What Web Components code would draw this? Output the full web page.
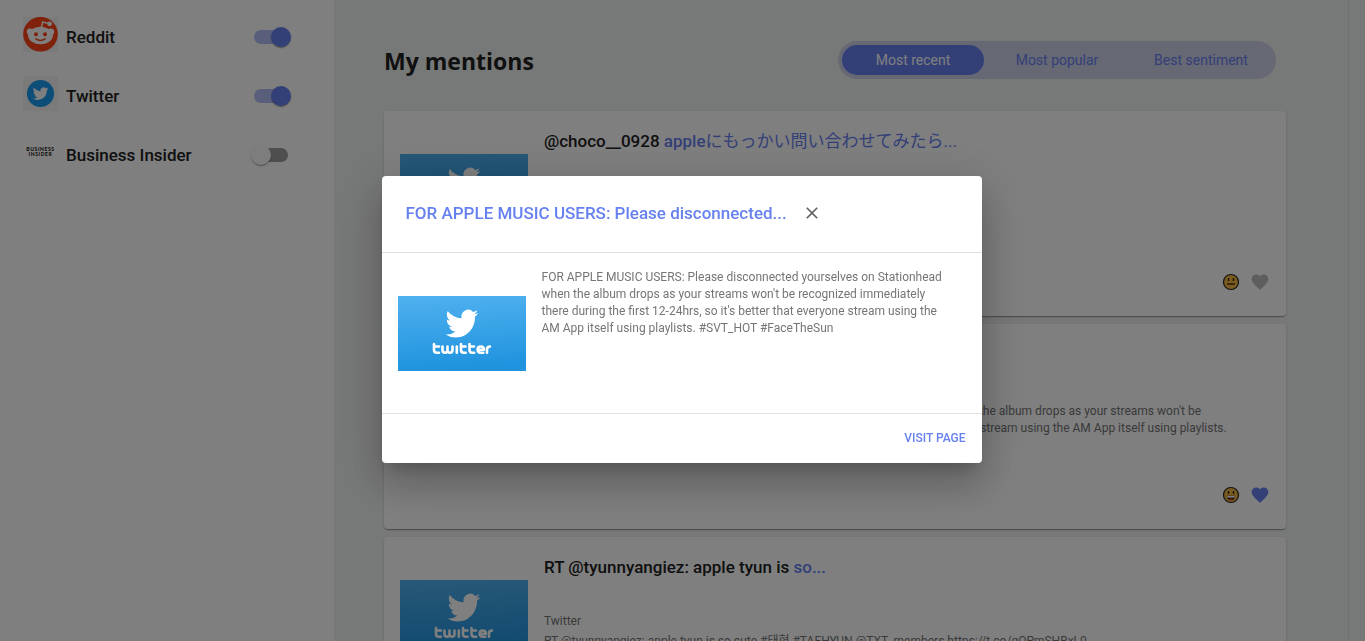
<!DOCTYPE html>
<html lang="en">
<head>
<meta charset="utf-8">
<title>My mentions</title>
<style>
  html, body { height: 100%; }
  body { margin: 0; overflow: hidden; background: #eff2f0; color: #212121; font-family: Roboto, "Noto Sans CJK JP", "Noto Sans CJK KR", sans-serif; }
</style>
</head>
<body>
<mentions-app></mentions-app>

<script>
const define = (name, html, setup) => {
  const template = document.createElement('template');
  template.innerHTML = html;
  customElements.define(name, class extends HTMLElement {
    constructor() {
      super();
      this.attachShadow({ mode: 'open' }).append(template.content.cloneNode(true));
    }
    connectedCallback() { if (setup) setup(this, this.shadowRoot); }
  });
};

const BIRD = 'M23.95 4.57a10 10 0 0 1-2.82.77 4.96 4.96 0 0 0 2.16-2.72c-.95.55-2 .96-3.13 1.18a4.92 4.92 0 0 0-8.38 4.48C7.69 8.1 4.07 6.13 1.64 3.16a4.82 4.82 0 0 0-.67 2.48c0 1.71.87 3.21 2.19 4.1a4.9 4.9 0 0 1-2.23-.62v.06a4.92 4.92 0 0 0 3.95 4.83 5 5 0 0 1-2.21.08 4.94 4.94 0 0 0 4.6 3.42A9.87 9.87 0 0 1 0 19.54a14 14 0 0 0 7.55 2.21c9.05 0 14-7.5 14-13.98 0-.21 0-.42-.02-.63a9.94 9.94 0 0 0 2.46-2.55z';

define('source-logo', `
  <style>
    :host { display: block; width: 35px; height: 35px; }
    svg { display: none; width: 35px; height: 35px; }
    :host([name="reddit"]) .reddit, :host([name="twitter"]) .twitter, :host([name="insider"]) .insider { display: block; }
  </style>
  <svg class="reddit" viewBox="0 0 35 35" aria-hidden="true">
    <rect width="35" height="35" fill="#f4f4f4"/><circle cx="17.5" cy="17.2" r="17.3" fill="#ff4216"/>
    <path d="M18.3 10.500 19.8 4.900 24.800 6.500" fill="none" stroke="#fff" stroke-width="1.500"/>
    <g fill="#fff"><circle cx="26.600" cy="6.800" r="2.400"/><circle cx="7" cy="14.800" r="3.200"/><circle cx="28" cy="14.800" r="3.200"/><ellipse cx="17.500" cy="18.500" rx="12.400" ry="8.700"/></g>
    <g fill="#ff4216"><circle cx="13" cy="17.200" r="2"/><circle cx="22" cy="17.200" r="2"/></g>
    <path d="M12.800 21.900q4.700 3.200 9.400 0" fill="none" stroke="#ff4216" stroke-width="1.300" stroke-linecap="round"/>
  </svg>
  <svg class="twitter" viewBox="0 0 35 35" aria-hidden="true">
    <defs><pattern id="checks" width="2" height="2" patternUnits="userSpaceOnUse"><rect width="2" height="2" fill="#fff"/><path d="M0 0h1v1H0zM1 1h1v1H1z" fill="#ececec"/></pattern></defs>
    <rect width="35" height="35" fill="url(#checks)"/><circle cx="17.500" cy="17.500" r="13.600" fill="#1a9cf0"/>
    <path d="${BIRD}" fill="#fff" transform="translate(9.800 9.800) scale(.65)"/>
  </svg>
  <svg class="insider" viewBox="0 0 35 35" font-family="Lato, sans-serif" font-size="5" font-weight="900" text-anchor="middle" letter-spacing=".6" fill="#222">
    <text x="17.500" y="16">BUSINESS</text><text x="17.500" y="21">INSIDER</text>
  </svg>`);

define('source-row', `
  <style>
    :host { display: flex; align-items: center; height: 59px; }
    source-logo { margin: 0 8px 4px 0; }
    label { flex: 1; font-size: 17px; line-height: 24px; font-weight: 500; }
    input { appearance: none; position: relative; margin: 0; width: 34px; height: 14px; border-radius: 7px; background: #9c9c9c; }
    input::before { content: ""; position: absolute; left: -3px; top: -3px; width: 20px; height: 20px; border-radius: 50%; background: #fafafa;
      box-shadow: 0 2px 1px -1px rgba(0,0,0,.2), 0 1px 1px rgba(0,0,0,.14), 0 1px 3px rgba(0,0,0,.12); }
    input:checked { background: #b2bff7; }
    input:checked::before { left: 17px; background: #6680f0; }
  </style>
  <source-logo></source-logo><label for="toggle"></label><input id="toggle" type="checkbox" role="switch">`,
  (host, root) => {
    root.querySelector('source-logo').setAttribute('name', host.getAttribute('logo'));
    root.querySelector('label').textContent = host.getAttribute('label');
    root.querySelector('input').checked = host.hasAttribute('on');
  });

define('source-list', `
  <style>
    :host { display: block; box-sizing: border-box; width: 334px; flex: none; padding: 7px 46px 0 23px; background: #fff; }
  </style>
  <source-row logo="reddit" label="Reddit" on></source-row>
  <source-row logo="twitter" label="Twitter" on></source-row>
  <source-row logo="insider" label="Business Insider"></source-row>`);

define('sort-tabs', `
  <style>
    :host { display: flex; gap: 2px; padding: 4px; border-radius: 19px; background: #cdd0e8; }
    button { width: 142px; height: 30px; padding: 0; border: 0; border-radius: 15px; background: none; color: #6680f0; font: 400 14px/20px Roboto, sans-serif; }
    button[aria-pressed="true"] { background: #6680f0; color: #fff; }
  </style>
  <button aria-pressed="true">Most recent</button><button aria-pressed="false">Most popular</button><button aria-pressed="false">Best sentiment</button>`);

define('twitter-banner', `
  <style>
    :host { display: flex; align-items: center; width: 128px; height: 128px; }
    svg { display: block; width: 128px; height: 75px; }
  </style>
  <svg viewBox="0 0 128 75" role="img" aria-label="Twitter">
    <defs><linearGradient id="sky" x1="0" y1="0" x2=".1" y2="1"><stop offset="0" stop-color="#50b1ef"/><stop offset="1" stop-color="#1f93de"/></linearGradient></defs>
    <rect width="128" height="75" fill="url(#sky)"/>
    <path d="${BIRD}" fill="#fff" transform="translate(47.500 10.500) scale(1.370 1.430)"/>
    <g fill="none" stroke="#fff" stroke-width="2.600" stroke-linecap="round" stroke-linejoin="round">
      <path d="M36 48v6q0 2.700 2.700 2.700h2.300M36 50.500h5"/>
      <path d="M44.500 50.500v3.500q0 2.700 2.500 2.700t2.500-2.700v-3.500M49.500 54q0 2.700 2.500 2.700t2.500-2.700v-3.500"/>
      <path d="M58.800 50.500v6.200"/>
      <path d="M63 48v6q0 2.700 2.700 2.700h2M63 50.500h4.500"/>
      <path d="M71.500 48v6q0 2.700 2.700 2.700h2M71.500 50.500h4.500"/>
      <path d="M80 53.700h6q0-3.200-3.200-3.200t-3.200 3.100 3.200 3.100h2.500"/>
      <path d="M89 56.700v-3.200q0-3 3-3"/>
    </g>
  </svg>`);

define('mood-face', `
  <style>
    :host { display: block; width: 18px; height: 18px; }
    svg { display: block; width: 18px; height: 18px; }
    .grin { display: none; }
    :host([mood="happy"]) .grin { display: block; }
    :host([mood="happy"]) .flat { display: none; }
  </style>
  <svg viewBox="0 0 18 18" aria-hidden="true">
    <circle cx="9" cy="9" r="7.500" fill="#f5b941" stroke="#222" stroke-width="1.200"/>
    <path d="M6.500 5v3M11.500 5v3" stroke="#3b2b10" stroke-width="1.500"/>
    <path class="flat" d="M5 11h8" stroke="#6b4a12" stroke-width="1.800"/>
    <g class="grin"><path d="M4.600 9.800h8.800q-.6 4.600-4.400 4.600T4.600 9.800z" fill="#402008"/><path d="M5.200 10h7.600v1.600H5.200z" fill="#fff"/><path d="M7 13.200q2-1.200 4 0-2 1.700-4 0z" fill="#e0402c"/></g>
  </svg>`);

define('mention-card', `
  <style>
    :host { display: flex; gap: 16px; box-sizing: border-box; min-height: 205px; padding: 16px; border-radius: 4px; background: #fff;
      box-shadow: 0 2px 1px -1px rgba(0,0,0,.2), 0 1px 1px rgba(0,0,0,.14), 0 1px 3px rgba(0,0,0,.12); }
    .text { flex: 1; display: flex; flex-direction: column; min-width: 0; }
    h2 { margin: 0; font-size: 17px; line-height: 28px; font-weight: 500; }
    .body { flex: 1; display: flex; flex-direction: column; justify-content: center; gap: 3px; padding-bottom: 8px; color: #757575; font-size: 12px; line-height: 17px; }
    p { margin: 0; max-width: 694px; }
    footer { display: flex; align-items: center; justify-content: flex-end; gap: 10px; height: 36px; }
    button { display: block; width: 20px; height: 20px; padding: 0; border: 0; background: none; color: #bdbdbd; }
    :host([liked]) button { color: #6680f0; }
    button svg { display: block; width: 20px; height: 20px; fill: currentColor; }
  </style>
  <twitter-banner></twitter-banner>
  <div class="text">
    <h2><slot name="title"></slot></h2>
    <div class="body"><p>Twitter</p><p><slot></slot></p></div>
    <footer><mood-face></mood-face><button aria-label="Like"><svg viewBox="0 0 24 24"><path d="m12 21.350-1.450-1.320C5.400 15.360 2 12.280 2 8.500 2 5.420 4.420 3 7.500 3c1.740 0 3.410.81 4.500 2.090C13.090 3.810 14.760 3 16.500 3 19.580 3 22 5.420 22 8.500c0 3.780-3.400 6.860-8.550 11.540L12 21.350z"/></svg></button></footer>
  </div>`,
  (host, root) => root.querySelector('mood-face').setAttribute('mood', host.getAttribute('mood') || 'neutral'));

define('mention-dialog', `
  <style>
    :host { position: fixed; inset: 0; display: flex; align-items: center; justify-content: center; padding: 0 2px 2px 0; background: rgba(0,0,0,.5); }
    section { width: 600px; max-width: 90%; border-radius: 4px; background: #fff;
      box-shadow: 0 11px 15px -7px rgba(0,0,0,.2), 0 24px 38px 3px rgba(0,0,0,.14), 0 9px 46px 8px rgba(0,0,0,.12); }
    header { display: flex; align-items: center; gap: 15px; padding: 24px 24px 26px; }
    h2 { margin: 0; color: #6680f0; font-size: 17px; line-height: 26px; font-weight: 500; }
    button { display: block; width: 20px; height: 20px; padding: 0; border: 0; background: none; color: #666; }
    svg { display: block; width: 20px; height: 20px; fill: currentColor; }
    .content { display: flex; gap: 16px; padding: 16px; border: solid #e0e0e0; border-width: 1px 0; }
    p { flex: 1; margin: 0; padding-right: 16px; color: #757575; font-size: 12px; line-height: 17px; }
    footer { display: flex; justify-content: flex-end; padding: 12px 16px; }
    a { color: #6680f0; font-size: 12px; line-height: 25px; font-weight: 500; text-decoration: none; text-transform: uppercase; }
  </style>
  <section role="dialog" aria-modal="true" aria-labelledby="title">
    <header><h2 id="title"><slot name="title"></slot></h2><button aria-label="Close"><svg viewBox="0 0 24 24"><path d="M19 6.410 17.590 5 12 10.590 6.410 5 5 6.410 10.590 12 5 17.590 6.410 19 12 13.410 17.590 19 19 17.590 13.410 12z"/></svg></button></header>
    <div class="content"><twitter-banner></twitter-banner><p><slot></slot></p></div>
    <footer><a href="#">Visit page</a></footer>
  </section>`);

define('mentions-app', `
  <style>
    :host { display: flex; height: 100vh; overflow: hidden; }
    main { flex: 1; min-width: 0; box-sizing: border-box; margin-right: 16px; padding: 41px 62px 0 50px; border-right: 1px solid #dfe1e0; }
    .bar { display: flex; align-items: flex-start; justify-content: space-between; padding-right: 10px; height: 70px; }
    h1 { margin: 4px 0 0; font: 700 23px/32px "Open Sans", sans-serif; }
    .list { display: flex; flex-direction: column; gap: 8px; }
    .hit { color: #6680f0; }
    .plain { font-weight: 400; }
  </style>
  <source-list></source-list>
  <main>
    <div class="bar"><h1>My mentions</h1><sort-tabs></sort-tabs></div>
    <div class="list">
      <mention-card><span slot="title">@choco__0928 <span class="hit">apple<span class="plain">にもっかい問い合わせてみたら...</span></span></span></mention-card>
      <mention-card mood="happy" liked><span slot="title" class="hit">FOR APPLE MUSIC USERS: Please disconnected...</span>FOR APPLE MUSIC USERS: Please disconnected yourselves on Stationhead when the album drops as your streams won't be recognized immediately there during the first 12-24hrs, so it's better that everyone stream using the AM App itself using playlists. #SVT_HOT #FaceTheSun</mention-card>
      <mention-card><span slot="title">RT @tyunnyangiez: apple tyun is <span class="hit">so...</span></span>RT @tyunnyangiez: apple tyun is so cute #태현 #TAEHYUN @TXT_members https://t.co/gOPmSHBxL0</mention-card>
    </div>
  </main>
  <mention-dialog><span slot="title">FOR APPLE MUSIC USERS: Please disconnected...</span>FOR APPLE MUSIC USERS: Please disconnected yourselves on Stationhead when the album drops as your streams won't be recognized immediately there during the first 12-24hrs, so it's better that everyone stream using the AM App itself using playlists. #SVT_HOT #FaceTheSun</mention-dialog>`);
</script>
</body>
</html>
